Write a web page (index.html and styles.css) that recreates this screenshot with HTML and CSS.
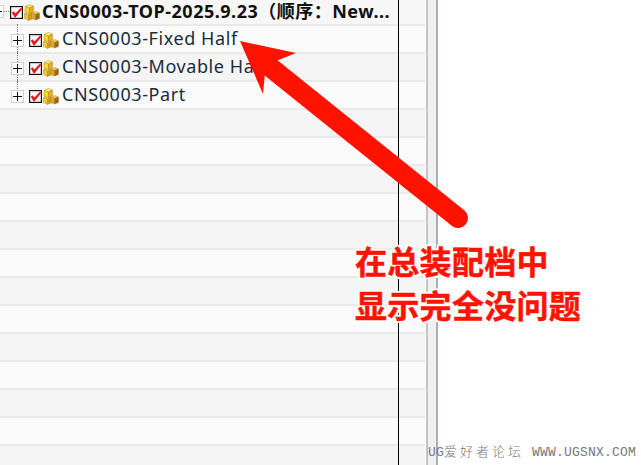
FILE: index.html
```html
<!DOCTYPE html>
<html lang="zh-CN">
<head>
    <meta charset="UTF-8">
    <title>CNS0003</title>
    <link rel="stylesheet" href="styles.css">
</head>
<body>
    <svg class="defs" width="0" height="0">
        <symbol id="check" viewBox="0 0 13 13">
            <rect x="0.6" y="0.6" width="11.8" height="11.8" fill="#fff" stroke="#111" stroke-width="1.2"/>
            <path d="M1.8 6.6 L3.8 5.2 L5.4 7.6 L11 1.6 L12.2 3 L5.4 11.4 L4.6 11.4 Z" fill="#ee1520"/>
        </symbol>
        <symbol id="cubes" viewBox="0 0 16 17">
            <g stroke="#a87a18" stroke-width="0.4">
                <path d="M0.5 9.5 L4 8 L8 9.5 L4.5 11 Z" fill="#f8dc5a"/>
                <path d="M0.5 9.5 L4.5 11 V16.5 L0.5 14.5 Z" fill="#f3c732"/>
                <path d="M4.5 11 L8 9.5 V15 L4.5 16.5 Z" fill="#d39a20"/>
                <path d="M7.5 9 L11.5 7.5 L15.5 9 L11.5 10.5 Z" fill="#ecc85a"/>
                <path d="M7.5 9 L11.5 10.5 V16 L7.5 14.5 Z" fill="#d9a52c"/>
                <path d="M11.5 10.5 L15.5 9 V14.5 L11.5 16 Z" fill="#96651c"/>
                <path d="M1 2.5 L5 0.5 L9.5 2 L5.5 4 Z" fill="#ffec6e"/>
                <path d="M1 2.5 L5.5 4 V9.5 L1 8 Z" fill="#fcd72c"/>
                <path d="M5.5 4 L9.5 2 V7.5 L5.5 9.5 Z" fill="#e8ae1e"/>
            </g>
        </symbol>
    </svg>

    <div class="window">
        <div class="tree">
            <div class="row row-root">
                <span class="expander"></span>
                <svg class="check"><use href="#check"/></svg>
                <svg class="cubes"><use href="#cubes"/></svg>
                <span class="name name-root">CNS0003-TOP-2025.9.23（顺序：New...</span>
            </div>
            <div class="row row-child">
                <span class="expander"></span>
                <svg class="check"><use href="#check"/></svg>
                <svg class="cubes"><use href="#cubes"/></svg>
                <span class="name">CNS0003-Fixed Half</span>
            </div>
            <div class="row row-child">
                <span class="expander"></span>
                <svg class="check"><use href="#check"/></svg>
                <svg class="cubes"><use href="#cubes"/></svg>
                <span class="name">CNS0003-Movable Half</span>
            </div>
            <div class="row row-child">
                <span class="expander"></span>
                <svg class="check"><use href="#check"/></svg>
                <svg class="cubes"><use href="#cubes"/></svg>
                <span class="name">CNS0003-Part</span>
            </div>
            <div class="row"></div>
            <div class="row"></div>
            <div class="row"></div>
            <div class="row"></div>
            <div class="row"></div>
            <div class="row"></div>
            <div class="row"></div>
            <div class="row"></div>
            <div class="row"></div>
            <div class="row"></div>
            <div class="row"></div>
            <div class="row"></div>
            <div class="row"></div>
        </div>
        <div class="splitter"></div>
        <div class="blank"></div>
    </div>

    <!-- Anotaciones encima de la captura -->
    <div class="column-line"></div>
    <svg class="arrow" width="641" height="465" viewBox="0 0 641 465">
        <path d="M270 67 L458 218" stroke="#ff1200" stroke-width="20" stroke-linecap="round"/>
        <path d="M240 41 L296 53 L276 61 L270 67 L265 73 L263 94 Z" fill="#ff1200"/>
    </svg>
    <div class="note">
        <div>在总装配档中</div>
        <div>显示完全没问题</div>
    </div>
    <div class="watermark">UG<span class="watermark-cjk">爱好者论坛</span> WWW.UGSNX.COM</div>
</body>
</html>
```

FILE: styles.css
```css
/* Ventana completa */
body {
    margin: 0;
    height: 465px;
    overflow: hidden;
    background: #fff;
    font-family: "Noto Sans", "Noto Sans CJK SC", sans-serif;
}
.defs {
    display: block;
    height: 0;
}
.window {
    display: flex;
    height: 465px;
}
/* Arbol de ensamblaje */
.tree {
    width: 425px;
    flex-shrink: 0;
    overflow: hidden;
}
.row {
    display: flex;
    align-items: center;
    box-sizing: border-box;
    height: 28px;
    border-bottom: 2px solid #e9e9e9;
    background: #f5f5f5;
}
.row:nth-child(even) {
    background: #fbfbfb;
}
.row-root {
    position: relative;
    height: 26px;
    background: #f7f7f7;
    padding-left: 10px;
}
.row-child {
    position: relative;
    padding-left: 11px;
}
/* Linea punteada del arbol */
.row-child::before {
    content: "";
    position: absolute;
    left: 17px;
    top: -2px;
    bottom: -2px;
    border-left: 1px dotted #777;
}
.row-child:nth-child(4)::before {
    bottom: 13px;
}
.row-child .check {
    margin-top: 2px;
}
.row-child .cubes {
    margin-top: 2px;
}
.expander {
    position: relative;
    z-index: 1;
    width: 11px;
    height: 11px;
    border: 1px solid #d0d0d0;
    background: linear-gradient(#111, #111) center / 9px 1px no-repeat,
                linear-gradient(#111, #111) center / 1px 9px no-repeat,
                #fff;
    margin: 2px 5px 0 0;
}
/* El nodo raiz queda cortado por el borde izquierdo */
.row-root .expander {
    position: absolute;
    left: -9px;
    top: 5px;
    margin: 0;
    background: linear-gradient(#111, #111) center / 9px 1px no-repeat, #fff;
}
.row-root .expander::after {
    content: "";
    position: absolute;
    left: 12px;
    top: 5px;
    width: 5px;
    border-top: 1px dotted #777;
}
.check {
    width: 13px;
    height: 13px;
    flex-shrink: 0;
}
.cubes {
    width: 16px;
    height: 17px;
    flex-shrink: 0;
    margin: 0 3px 0 1px;
}
.name {
    font-size: 18px;
    color: #1c2b3a;
    letter-spacing: 0.58px;
    white-space: nowrap;
    margin-bottom: 2px;
}
.name-root {
    font-weight: 700;
    color: #111;
    letter-spacing: 0.5px;
    margin-bottom: 4px;
    margin-left: -1px;
}
.row-root .cubes {
    margin-right: 3px;
}
.splitter {
    width: 12px;
    flex-shrink: 0;
    box-sizing: border-box;
    margin-left: 1px;
    background: #f0f0f0;
    border-left: 2px solid #c4c4c4;
    border-right: 2px solid #a6afb8;
}
.blank {
    flex: 1;
}
/* Anotaciones */
.column-line {
    position: absolute;
    left: 398px;
    top: 0;
    width: 1px;
    height: 465px;
    background: #000;
}
.arrow {
    position: absolute;
    left: 0;
    top: 0;
}
.note {
    position: absolute;
    left: 355px;
    top: 240px;
    font-size: 32px;
    font-weight: 700;
    line-height: 44px;
    letter-spacing: 0.3px;
    color: #ff1200;
    white-space: nowrap;
    -webkit-text-stroke: 0.5px #ff1200;
    text-shadow: 2px 0 0 #fff, -2px 0 0 #fff, 0 2px 0 #fff, 0 -2px 0 #fff,
                 2px 2px 0 #fff, -2px -2px 0 #fff, 2px -2px 0 #fff, -2px 2px 0 #fff;
}
.watermark {
    position: absolute;
    left: 428px;
    top: 444px;
    font-family: "Liberation Mono", "Noto Sans CJK SC", monospace;
    font-size: 13px;
    line-height: 17px;
    letter-spacing: 0.2px;
    color: #777;
    white-space: nowrap;
}
.watermark-cjk {
    letter-spacing: 3px;
    font-weight: 300;
}
```
